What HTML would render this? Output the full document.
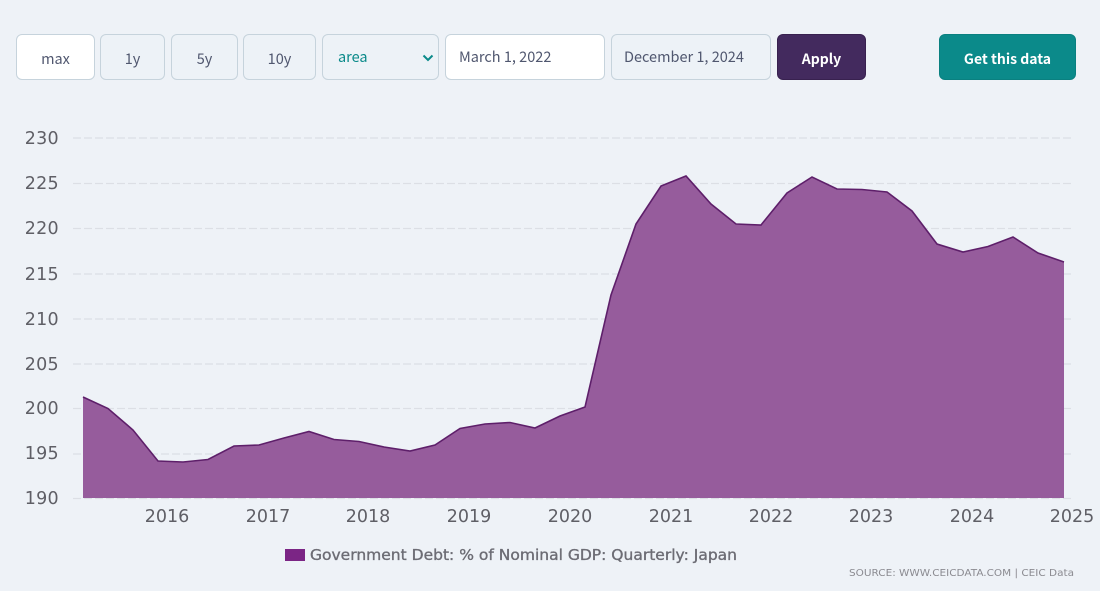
<!DOCTYPE html>
<html><head><meta charset="utf-8">
<style>
html,body{margin:0;padding:0;background:#eef2f7;width:1100px;height:591px;overflow:hidden}
.b{position:absolute;box-sizing:border-box;top:34px;height:46px;border:1px solid #c6d3dc;border-radius:6px;background:#edf2f7;color:#50576f;font:14.5px "Noto Sans CJK JP","Liberation Sans",sans-serif;display:flex;align-items:center;justify-content:center;padding-top:3px}
.w{background:#fff}
.l{justify-content:flex-start;padding:0 0 1px 13px}
svg{position:absolute;left:0;top:0}
</style></head><body>
<svg width="1100" height="591" viewBox="0 0 1100 591">
<g stroke="#dcdfe5" stroke-width="1.2" stroke-dasharray="8 3">
<line x1="73" x2="1074" y1="138" y2="138"/>
<line x1="73" x2="1074" y1="183.5" y2="183.5"/>
<line x1="73" x2="1074" y1="228.5" y2="228.5"/>
<line x1="73" x2="1074" y1="274" y2="274"/>
<line x1="73" x2="1074" y1="319" y2="319"/>
<line x1="73" x2="1074" y1="364" y2="364"/>
<line x1="73" x2="1074" y1="408.5" y2="408.5"/>
<line x1="73" x2="1074" y1="454" y2="454"/>
<line x1="73" x2="1074" y1="498.5" y2="498.5"/>
</g>
<path fill="#965c9c" d="M83 397L108 408.5L133 430L158 461L183 462L208 459.5L234 446L259 445L284 438L309 431.5L334 439.5L359 441.5L384 447L410 451L435 445L460 428.5L485 424L510 422.5L535 428L560 416L585 407L611 295L636 224L661 186L686 176L711 204L736 224L761 225L787 193L812 177L837 189L862 189.5L887 192L912 211L937 244L963 252L988 246.5L1013 237L1038 253L1064 262L1064 498L83 498Z"/>
<path fill="none" stroke="#5e1f6a" stroke-width="1.6" d="M83 397L108 408.5L133 430L158 461L183 462L208 459.5L234 446L259 445L284 438L309 431.5L334 439.5L359 441.5L384 447L410 451L435 445L460 428.5L485 424L510 422.5L535 428L560 416L585 407L611 295L636 224L661 186L686 176L711 204L736 224L761 225L787 193L812 177L837 189L862 189.5L887 192L912 211L937 244L963 252L988 246.5L1013 237L1038 253L1064 262"/>
<g font-family="'DejaVu Sans',sans-serif" font-size="17.5" fill="#5f5f66" text-anchor="end" letter-spacing="0.3">
<text x="59" y="144">230</text>
<text x="59" y="189">225</text>
<text x="59" y="234">220</text>
<text x="59" y="280">215</text>
<text x="59" y="325">210</text>
<text x="59" y="370">205</text>
<text x="59" y="414">200</text>
<text x="59" y="459">195</text>
<text x="59" y="504">190</text>
</g>
<g font-family="'DejaVu Sans',sans-serif" font-size="17.5" fill="#5f5f66" text-anchor="middle">
<text x="167" y="522">2016</text>
<text x="268" y="522">2017</text>
<text x="368" y="522">2018</text>
<text x="469" y="522">2019</text>
<text x="570" y="522">2020</text>
<text x="671" y="522">2021</text>
<text x="771" y="522">2022</text>
<text x="871" y="522">2023</text>
<text x="972" y="522">2024</text>
<text x="1072" y="522">2025</text>
</g>
<rect x="285" y="549" width="20" height="12" fill="#7b2585"/>
<text x="310" y="560" font-family="'DejaVu Sans',sans-serif" font-size="15.2" fill="#6c6c74" stroke="#6c6c74" stroke-width="0.35" textLength="427" lengthAdjust="spacingAndGlyphs">Government Debt: % of Nominal GDP: Quarterly: Japan</text>
<text x="849" y="576" font-family="'DejaVu Sans',sans-serif" font-size="10" fill="#8b8b91" textLength="225" lengthAdjust="spacingAndGlyphs">SOURCE: WWW.CEICDATA.COM | CEIC Data</text>
</svg>
<div class="b w" style="left:16px;width:79px">max</div>
<div class="b" style="left:100px;width:65px">1y</div>
<div class="b" style="left:171px;width:67px">5y</div>
<div class="b" style="left:243px;width:73px">10y</div>
<div class="b l" style="left:322px;width:117px;color:#0b8a8a;padding-left:15px">area
<svg width="12" height="8" style="left:99px;top:19px" viewBox="0 0 12 8"><path d="M1.5 1.5L6 6L10.5 1.5" fill="none" stroke="#0b8a8a" stroke-width="2"/></svg></div>
<div class="b w l" style="left:445px;width:160px">March 1, 2022</div>
<div class="b l" style="left:611px;width:160px;padding-left:12px">December 1, 2024</div>
<div class="b" style="left:777px;width:89px;background:#432a5e;border-color:#38214f;color:#fff;font-weight:700;font-size:14px">Apply</div>
<div class="b" style="left:939px;width:137px;background:#0b8a8a;border-color:#0a8080;color:#fff;font-weight:700;font-size:14px">Get this data</div>
</body></html>
